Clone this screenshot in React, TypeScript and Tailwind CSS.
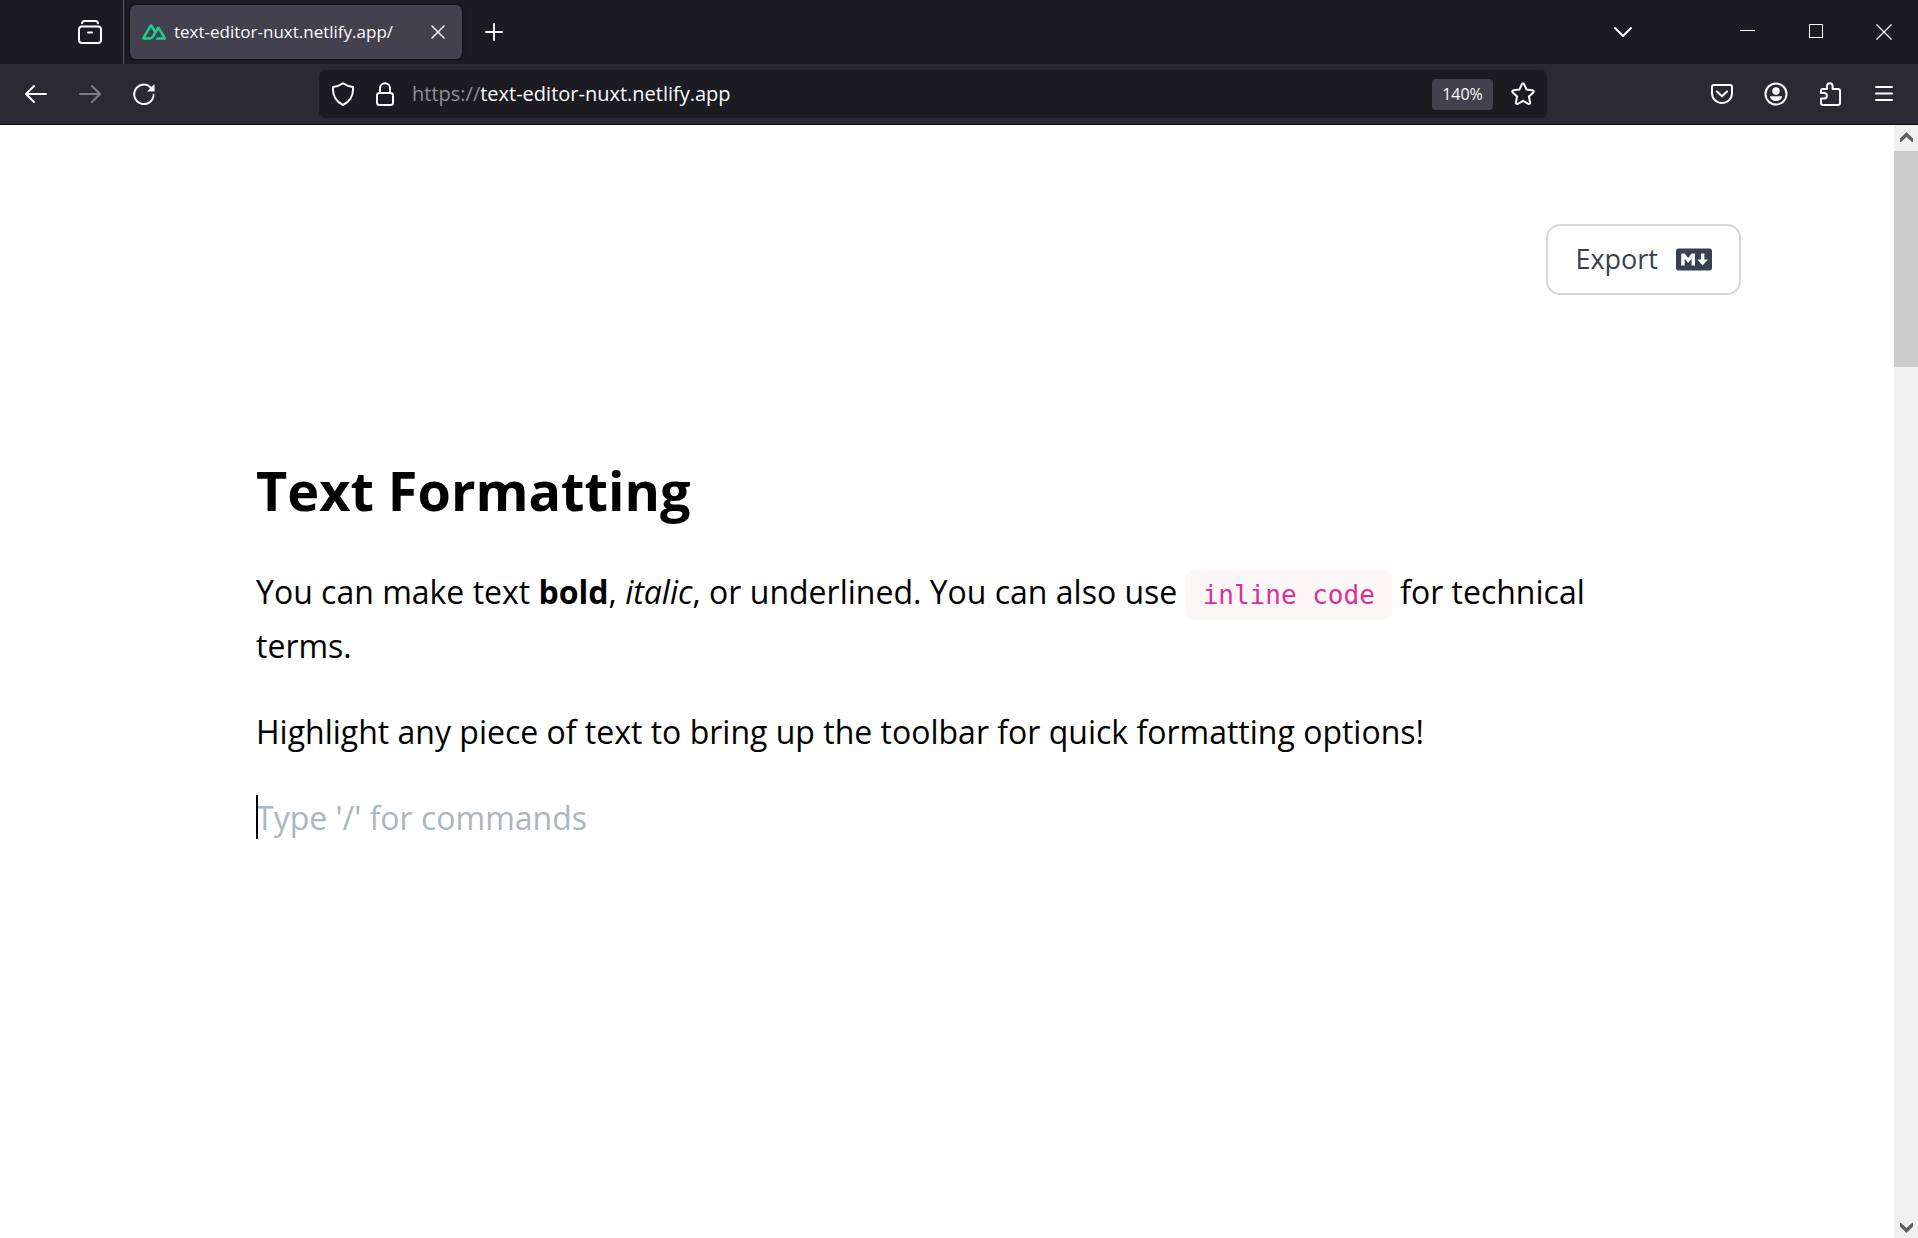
import type { ReactNode } from "react";
import { FaMarkdown } from "react-icons/fa6";

const stroke = {
  fill: "none",
  stroke: "currentColor",
  strokeWidth: 2,
  strokeLinecap: "round" as const,
  strokeLinejoin: "round" as const,
};

function Icon({ children, size = 24 }: { children: ReactNode; size?: number }) {
  return (
    <svg width={size} height={size} viewBox={`0 0 ${size} ${size}`} {...stroke} aria-hidden="true" className="shrink-0">
      {children}
    </svg>
  );
}

function ToolButton({ label, disabled, children }: { label: string; disabled?: boolean; children: ReactNode }) {
  return (
    <button
      type="button"
      aria-label={label}
      disabled={disabled}
      className="flex h-12 w-[54px] shrink-0 items-center justify-center text-[#fbfbfe] disabled:text-[#7f7e86]"
    >
      {children}
    </button>
  );
}

function WindowButton({ label, children }: { label: string; children: ReactNode }) {
  return (
    <button type="button" aria-label={label} className="flex h-full w-[68px] items-center justify-center text-white">
      {children}
    </button>
  );
}

function NuxtLogo() {
  return (
    <svg width="24" height="24" viewBox="0 0 24 24" fill="#1bd187" aria-hidden="true" className="shrink-0">
      <path d="M13.4642 19.8295h8.9218c.2834 0 .5618-.0723.8072-.2098a1.5899 1.5899 0 0 0 .5908-.5732 1.5293 1.5293 0 0 0 .216-.783 1.529 1.529 0 0 0-.2167-.7828L17.7916 7.4142a1.59 1.59 0 0 0-.5907-.573 1.6524 1.6524 0 0 0-.807-.2099c-.2833 0-.5616.0724-.807.2098a1.59 1.59 0 0 0-.5907.5731L13.4642 9.99l-2.9954-5.0366a1.5913 1.5913 0 0 0-.591-.573 1.6533 1.6533 0 0 0-.8071-.2098c-.2834 0-.5617.0723-.8072.2097a1.5913 1.5913 0 0 0-.591.573L.2168 17.4808A1.5292 1.5292 0 0 0 0 18.2635c-.0001.2749.0744.545.216.783a1.59 1.59 0 0 0 .5908.5732c.2454.1375.5238.2098.8072.2098h5.6003c2.219 0 3.8554-.9454 4.9813-2.7899l2.7337-4.5922L16.3935 9.99l4.3944 7.382h-5.8586ZM7.123 17.3694l-3.9083-.0009 5.8586-9.8421 2.9232 4.921-1.9572 3.2892c-.7478 1.1967-1.5972 1.6328-2.9163 1.6328z" />
    </svg>
  );
}

function TabStrip() {
  return (
    <div className="flex h-16 items-center bg-[#1c1b22]">
      <div className="flex h-full w-[124px] items-center justify-end border-r border-[#5b5a63] pr-1.5">
        <ToolButton label="View recent browsing">
          <Icon>
            <path d="M4 3.2C4.3 2 5 1 6.4 1h11.2c1.400 0 2.100 1 2.400 2.200" />
            <rect x="1" y="6.500" width="22" height="16.500" rx="3" />
            <path d="M10 12.500h4" />
          </Icon>
        </ToolButton>
      </div>
      <div className="ml-1.5 flex h-[54px] w-[332px] items-center rounded-md bg-[#42414d] pr-2 pl-3 shadow-[0_0_4px_rgba(0,0,0,0.5)]">
        <NuxtLogo />
        <span className="ml-2 flex-1 text-[17px] whitespace-nowrap text-[#fbfbfe]">text-editor-nuxt.netlify.app/</span>
        <button type="button" aria-label="Close tab" className="flex size-8 items-center justify-center text-[#fbfbfe]">
          <svg width="14" height="14" viewBox="0 0 14 14" {...stroke} strokeWidth={1.5} aria-hidden="true">
            <path d="M1 1l12 12M13 1L1 13" />
          </svg>
        </button>
      </div>
      <div className="ml-[5px]">
        <ToolButton label="Open a new tab">
          <Icon size={18}>
            <path d="M9 1v16M1 9h16" />
          </Icon>
        </ToolButton>
      </div>
      <div className="ml-auto flex h-full items-center">
        <div className="mr-16">
          <ToolButton label="List all tabs">
            <Icon size={20}>
              <path d="M2 6l8 8 8-8" />
            </Icon>
          </ToolButton>
        </div>
        <WindowButton label="Minimize">
          <svg width="16" height="16" viewBox="0 0 16 16" stroke="currentColor" aria-hidden="true">
            <path d="M0 6.500h15" />
          </svg>
        </WindowButton>
        <WindowButton label="Maximize">
          <svg width="16" height="16" viewBox="0 0 16 16" fill="none" stroke="currentColor" aria-hidden="true">
            <rect x="1.500" y=".500" width="13" height="13" />
          </svg>
        </WindowButton>
        <WindowButton label="Close">
          <svg width="16" height="16" viewBox="0 0 16 16" stroke="currentColor" strokeWidth="1.300" aria-hidden="true">
            <path d="M.5.500l15 15M15.500.500l-15 15" />
          </svg>
        </WindowButton>
      </div>
    </div>
  );
}

function AddressBar() {
  return (
    <div className="mx-[148px] flex h-12 min-w-0 flex-1 items-center rounded-md bg-[#1c1b22] px-3 text-[#fbfbfe]">
      <button type="button" aria-label="Tracking protection">
        <Icon>
          <path d="M12 1.200c3 2.100 6.200 3.300 10 3.800.5 6.800-2 14-10 18C4 19 1.500 11.800 2 5c3.800-.5 7-1.700 10-3.800z" />
        </Icon>
      </button>
      <button type="button" aria-label="Site information" className="ml-[18px]">
        <Icon>
          <rect x="4" y="11" width="16" height="12" rx="2.500" />
          <path d="M7 11V6.200a5 5 0 0 1 10 0V11" />
        </Icon>
      </button>
      <label className="ml-[15px] flex min-w-0 flex-1 items-center text-xl">
        <span className="text-[#8f8f95]">https://</span>
        <input
          type="text"
          aria-label="Address"
          defaultValue="text-editor-nuxt.netlify.app"
          className="min-w-0 flex-1 bg-transparent text-[#fbfbfe] outline-none"
        />
      </label>
      <button type="button" className="h-[31px] w-[61px] rounded bg-[#42414d] text-center text-base">
        140%
      </button>
      <button type="button" aria-label="Bookmark this page" className="ml-[18px]">
        <Icon>
          <path d="M10.900 2.100a1.200 1.200 0 0 1 2.200 0l2.500 5.500 6 .7a1.200 1.200 0 0 1 .7 2.100l-4.400 4.100 1.200 6a1.200 1.200 0 0 1-1.800 1.300L12 18.800l-5.300 3a1.200 1.200 0 0 1-1.800-1.300l1.200-6-4.400-4.100a1.200 1.200 0 0 1 .7-2.100l6-.7z" />
        </Icon>
      </button>
    </div>
  );
}

function NavBar() {
  return (
    <div className="flex h-[61px] items-center border-b border-[#0c0c0d] bg-[#2b2a33] pr-[7px] pl-[9px]">
      <ToolButton label="Back">
        <Icon>
          <path d="M22 12H2.500M10 4l-8 8 8 8" />
        </Icon>
      </ToolButton>
      <ToolButton label="Forward" disabled>
        <Icon>
          <path d="M2 12h19.500M14 4l8 8-8 8" />
        </Icon>
      </ToolButton>
      <ToolButton label="Reload">
        <Icon>
          <path d="M21.600 13A9.700 9.700 0 1 1 18.500 5.200" />
          <path d="M22.500 2v7.500H15z" fill="currentColor" stroke="none" />
        </Icon>
      </ToolButton>
      <AddressBar />
      <ToolButton label="Save to Pocket">
        <Icon>
          <path d="M4 3h16a2 2 0 0 1 2 2v6.200a10 9.800 0 0 1-20 0V5a2 2 0 0 1 2-2z" />
          <path d="M7 9.500l5 4.800 5-4.800" />
        </Icon>
      </ToolButton>
      <ToolButton label="Account">
        <Icon>
          <circle cx="12" cy="12" r="10.500" />
          <circle cx="12" cy="9" r="3.800" fill="currentColor" stroke="none" />
          <path d="M6 14.300h12c-.2 3.200-3 4.700-6 4.700s-5.800-1.500-6-4.700z" fill="currentColor" stroke="none" />
        </Icon>
      </ToolButton>
      <ToolButton label="Extensions">
        <Icon>
          <path d="M9 7V4a2.800 2.800 0 0 1 5.600 0v3H20a2 2 0 0 1 2 2v12a2 2 0 0 1-2 2H5a2 2 0 0 1-2-2v-4.500h3.200a2.700 2.700 0 0 0 0-5.400H3V9a2 2 0 0 1 2-2z" />
        </Icon>
      </ToolButton>
      <ToolButton label="Open application menu">
        <Icon size={20}>
          <path d="M2 3h16M2 9.500h16M2 16h16" />
        </Icon>
      </ToolButton>
    </div>
  );
}

function Scrollbar() {
  return (
    <div className="flex w-6 shrink-0 flex-col bg-[#f0f0f0] text-[#606060]">
      <div className="flex h-[26px] items-center justify-center">
        <svg width="14" height="12" viewBox="0 0 14 12" fill="currentColor" aria-hidden="true">
          <path d="M1 6.500L7.500 0 14 6.500V10h-1L7.500 5 2 10H1z" />
        </svg>
      </div>
      <div className="h-[216px] bg-[#cdcdcd]" />
      <div className="mt-auto flex h-5 items-center justify-center">
        <svg width="14" height="10" viewBox="0 0 14 10" fill="currentColor" aria-hidden="true">
          <path d="M1 3.500L7.500 10 14 3.500V0h-1L7.500 5 2 0H1z" />
        </svg>
      </div>
    </div>
  );
}

function Editor() {
  return (
    <main className="min-w-0 flex-1 px-8 pt-[99px]">
      <div className="mx-auto flex max-w-[1588px] justify-end">
        <button
          type="button"
          className="flex h-[71px] items-center gap-[18px] rounded-[14px] border-2 border-[#d5d8dc] px-[27px] text-[27px] text-[#374151]"
        >
          Export
          <FaMarkdown className="h-[29px] w-9" aria-hidden="true" />
        </button>
      </div>
      <article className="mx-auto mt-[155px] flex max-w-[1382px] flex-col text-[32px] leading-[54px] text-black">
        <h1 className="mb-[35px] text-[54px] leading-[80px] font-bold">Text Formatting</h1>
        <p className="mb-8">
          You can make text <strong>bold</strong>, <em>italic</em>, or underlined. You can also use{" "}
          <code className="rounded-lg bg-[#fbf7f7] px-[17px] py-2.5 font-['DejaVu_Sans_Mono',monospace] text-[26px] leading-none text-[#db3099]">
            inline code
          </code>{" "}
          for technical terms.
        </p>
        <p className="mb-8">Highlight any piece of text to bring up the toolbar for quick formatting options!</p>
        <div className="relative">
          <input
            type="text"
            aria-label="New block"
            placeholder="Type '/' for commands"
            className="h-[54px] w-full bg-transparent outline-none placeholder:text-[#adb5bd]"
          />
          <span className="absolute top-1 left-0 h-11 w-0.5 bg-black" />
        </div>
      </article>
    </main>
  );
}

export default function App() {
  return (
    <div className="flex min-h-screen flex-col bg-white font-['Open_Sans','Noto_Sans',sans-serif]">
      <header>
        <TabStrip />
        <NavBar />
      </header>
      <div className="flex flex-1">
        <Editor />
        <Scrollbar />
      </div>
    </div>
  );
}
